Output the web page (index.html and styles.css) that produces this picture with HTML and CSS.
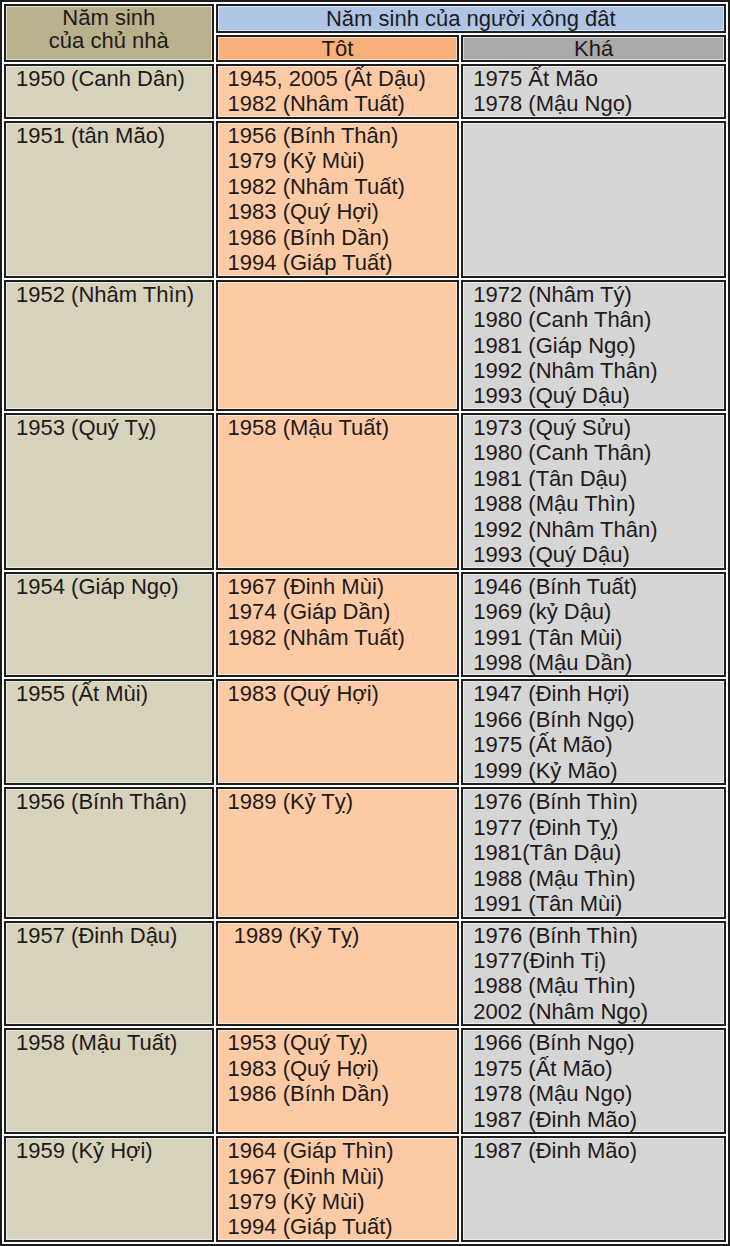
FILE: index.html
```html
<!DOCTYPE html>
<html lang="vi">
<head>
<meta charset="utf-8">
<title>Năm sinh xông đất</title>
<link rel="stylesheet" href="styles.css">
</head>
<body>
<table class="grid">
  <colgroup>
    <col class="c1">
    <col class="c2">
    <col class="c3">
  </colgroup>
  <thead>
    <tr class="h1">
      <th rowspan="2" class="owner">Năm sinh<br>của chủ nhà</th>
      <th colspan="2" class="guest">Năm sinh của người xông đât</th>
    </tr>
    <tr class="h2">
      <th class="good">Tôt</th>
      <th class="fair">Khá</th>
    </tr>
  </thead>
  <tbody>
    <tr>
      <td class="a">1950 (Canh Dân)</td>
      <td class="b">1945, 2005 (Ất Dậu)<br>1982 (Nhâm Tuất)</td>
      <td class="c">1975 Ất Mão<br>1978 (Mậu Ngọ)</td>
    </tr>
    <tr>
      <td class="a">1951 (tân Mão)</td>
      <td class="b">1956 (Bính Thân)<br>1979 (Kỷ Mùi)<br>1982 (Nhâm Tuất)<br>1983 (Quý Hợi)<br>1986 (Bính Dần)<br>1994 (Giáp Tuất)</td>
      <td class="c"></td>
    </tr>
    <tr>
      <td class="a">1952 (Nhâm Thìn)</td>
      <td class="b"></td>
      <td class="c">1972 (Nhâm Tý)<br>1980 (Canh Thân)<br>1981 (Giáp Ngọ)<br>1992 (Nhâm Thân)<br>1993 (Quý Dậu)</td>
    </tr>
    <tr>
      <td class="a">1953 (Quý Tỵ)</td>
      <td class="b">1958 (Mậu Tuất)</td>
      <td class="c">1973 (Quý Sửu)<br>1980 (Canh Thân)<br>1981 (Tân Dậu)<br>1988 (Mậu Thìn)<br>1992 (Nhâm Thân)<br>1993 (Quý Dậu)</td>
    </tr>
    <tr>
      <td class="a">1954 (Giáp Ngọ)</td>
      <td class="b">1967 (Đinh Mùi)<br>1974 (Giáp Dần)<br>1982 (Nhâm Tuất)</td>
      <td class="c">1946 (Bính Tuất)<br>1969 (kỷ Dậu)<br>1991 (Tân Mùi)<br>1998 (Mậu Dần)</td>
    </tr>
    <tr>
      <td class="a">1955 (Ất Mùi)</td>
      <td class="b">1983 (Quý Hợi)</td>
      <td class="c">1947 (Đinh Hợi)<br>1966 (Bính Ngọ)<br>1975 (Ất Mão)<br>1999 (Kỷ Mão)</td>
    </tr>
    <tr>
      <td class="a">1956 (Bính Thân)</td>
      <td class="b">1989 (Kỷ Tỵ)</td>
      <td class="c">1976 (Bính Thìn)<br>1977 (Đinh Tỵ)<br>1981(Tân Dậu)<br>1988 (Mậu Thìn)<br>1991 (Tân Mùi)</td>
    </tr>
    <tr>
      <td class="a">1957 (Đinh Dậu)</td>
      <td class="b">&nbsp;1989 (Kỷ Tỵ)</td>
      <td class="c">1976 (Bính Thìn)<br>1977(Đinh Tị)<br>1988 (Mậu Thìn)<br>2002 (Nhâm Ngọ)</td>
    </tr>
    <tr>
      <td class="a">1958 (Mậu Tuất)</td>
      <td class="b">1953 (Quý Tỵ)<br>1983 (Quý Hợi)<br>1986 (Bính Dần)</td>
      <td class="c">1966 (Bính Ngọ)<br>1975 (Ất Mão)<br>1978 (Mậu Ngọ)<br>1987 (Đinh Mão)</td>
    </tr>
    <tr>
      <td class="a">1959 (Kỷ Hợi)</td>
      <td class="b">1964 (Giáp Thìn)<br>1967 (Đinh Mùi)<br>1979 (Kỷ Mùi)<br>1994 (Giáp Tuất)</td>
      <td class="c">1987 (Đinh Mão)</td>
    </tr>
  </tbody>
</table>
</body>
</html>
```

FILE: styles.css
```css
html, body {
  margin: 0;
  padding: 0;
  background: #ffffff;
}

.grid {
  width: 730px;
  table-layout: fixed;
  border-collapse: separate;
  border-spacing: 2px;
  border: 2px solid #1c1c1c;
  font-family: "Liberation Sans", Arial, sans-serif;
  font-size: 22px;
  color: #1f1a1a;
}

.c1 { width: 209px; }
.c2 { width: 243px; }
.c3 { width: 264px; }

.grid th,
.grid td {
  border: 2px solid #1e1e1e;
  box-shadow: inset 0 0 0 1px rgba(255, 255, 255, 0.55);
  padding: 0;
  font-weight: normal;
}

.grid th {
  text-align: center;
}

.h1 th.guest {
  height: 25px;
  line-height: 25px;
  background: #aec5e6;
  vertical-align: middle;
}

.h2 th {
  height: 23px;
  line-height: 23px;
  vertical-align: middle;
}

th.owner {
  background: #b8b18c;
  line-height: 23px;
  vertical-align: top;
}

th.good { background: #f8b07b; }
th.fair { background: #a9a9a9; }

.grid td {
  vertical-align: top;
  text-align: left;
  line-height: 25.45px;
  padding-left: 10px;
}

td.a { background: #d6d2bb; }
td.b { background: #fccaa5; }
td.c { background: #d5d5d5; }
```
